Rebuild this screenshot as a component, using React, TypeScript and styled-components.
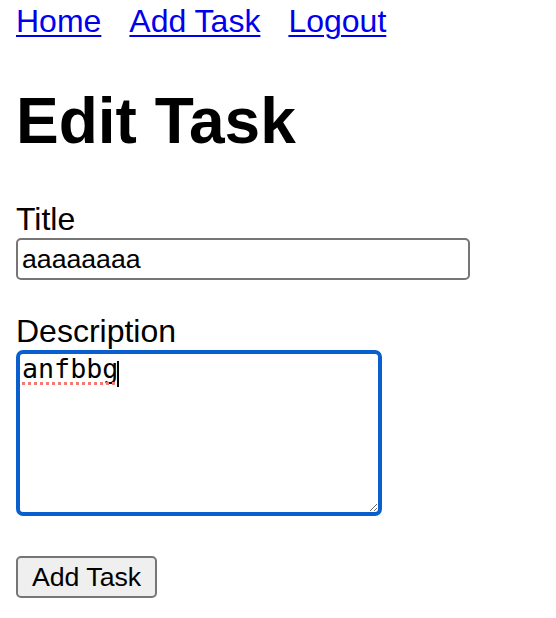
import React from "react";
import styled, { createGlobalStyle } from "styled-components";

const GlobalStyle = createGlobalStyle`
  body {
    margin: 0;
    padding: 0 16px;
    background: #fff;
    font-family: "Liberation Sans", Arial, sans-serif;
    color: #000;
  }
`;

const Nav = styled.nav`
  display: flex;
  gap: 28px;
  margin-top: 3px;
  font-size: 32px;
  line-height: 37px;
`;

const NavLink = styled.a`
  color: #0000ee;
  text-decoration: underline;
  text-underline-offset: 3px;
  text-decoration-thickness: 2px;
`;

const Heading = styled.h1`
  margin: 44px 0 43px;
  font-size: 64px;
  line-height: 74px;
  font-weight: 700;
`;

const Form = styled.form`
  display: flex;
  flex-direction: column;
  align-items: flex-start;
`;

const Field = styled.div<{ $last?: boolean }>`
  display: flex;
  flex-direction: column;
  align-items: flex-start;
  margin-bottom: ${(p) => (p.$last ? "40px" : "33px")};
`;

const Label = styled.label`
  font-size: 32px;
  line-height: 37px;
`;

const TextInput = styled.input`
  box-sizing: border-box;
  width: 454px;
  height: 42px;
  margin: 0;
  padding: 2px 4px;
  border: 2px solid #767676;
  border-radius: 5px;
  font-family: "Liberation Sans", Arial, sans-serif;
  font-size: 26.67px;
  color: #000;
  outline: none;
`;

const AreaWrap = styled.div`
  position: relative;
`;

const TextArea = styled.textarea`
  display: block;
  box-sizing: border-box;
  width: 366px;
  height: 166px;
  margin: 0;
  padding: 0 2px;
  border: 4px solid #0a5fcf;
  border-radius: 7px;
  font-family: "DejaVu Sans Mono", monospace;
  font-size: 26.67px;
  line-height: 29px;
  color: #000;
  outline: none;
  resize: both;
  &:focus {
    border-color: #0a5fcf;
    outline: none;
  }
`;

const SpellMark = styled.span`
  position: absolute;
  left: 6px;
  top: 32px;
  width: 93px;
  border-bottom: 3px dotted #f27a72;
  pointer-events: none;
`;

const Caret = styled.span`
  position: absolute;
  left: 101px;
  top: 11px;
  width: 2px;
  height: 26px;
  background: #000;
  pointer-events: none;
`;

const SubmitButton = styled.button`
  box-sizing: border-box;
  height: 42px;
  padding: 0 14px;
  background: #efefef;
  border: 2px solid #767676;
  border-radius: 5px;
  font-family: "Liberation Sans", Arial, sans-serif;
  font-size: 26.67px;
  color: #000;
`;

export default function App() {
  return (
    <>
      <GlobalStyle />
      <Nav>
        <NavLink href="#">Home</NavLink>
        <NavLink href="#">Add Task</NavLink>
        <NavLink href="#">Logout</NavLink>
      </Nav>
      <Heading>Edit Task</Heading>
      <Form onSubmit={(e) => e.preventDefault()}>
        <Field>
          <Label htmlFor="title">Title</Label>
          <TextInput id="title" type="text" defaultValue="aaaaaaaa" />
        </Field>
        <Field $last>
          <Label htmlFor="description">Description</Label>
          <AreaWrap>
            <TextArea id="description" rows={5} spellCheck={false} defaultValue="anfbbg" />
            <SpellMark />
            <Caret />
          </AreaWrap>
        </Field>
        <SubmitButton type="submit">Add Task</SubmitButton>
      </Form>
    </>
  );
}
